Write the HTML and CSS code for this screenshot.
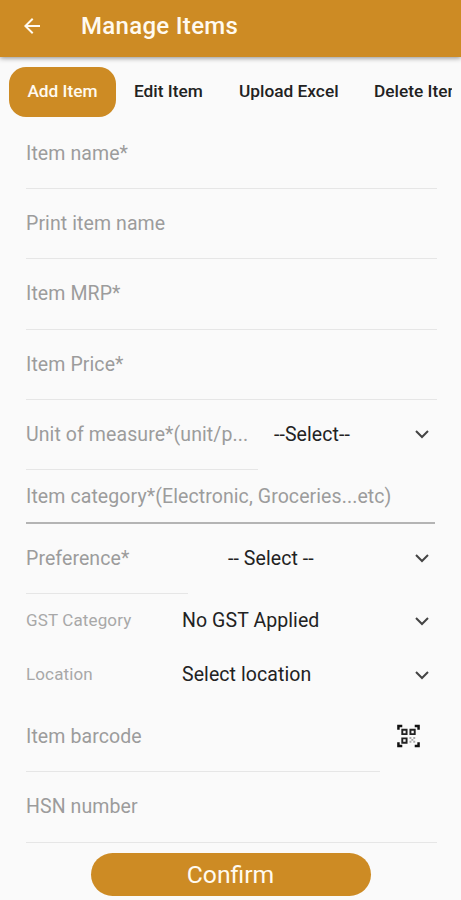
FILE: index.html
```
<!DOCTYPE html>
<html lang="en">
<head>
    <meta charset="UTF-8">
    <meta name="viewport" content="width=device-width, initial-scale=1.0">
    <title>Manage Items</title>
    <link rel="stylesheet" href="styles.css">
</head>
<body>
    <header class="app-bar">
        <svg class="back" viewBox="0 0 24 24"><path d="M20 11H7.83l5.59-5.59L12 4l-8 8 8 8 1.41-1.41L7.83 13H20z"/></svg>
        <h1>Manage Items</h1>
    </header>

    <nav class="tabs">
        <a class="tab active">Add Item</a>
        <a class="tab edit">Edit Item</a>
        <a class="tab upload">Upload Excel</a>
        <a class="tab delete">Delete Item</a>
    </nav>

    <main class="form">
        <div class="row"><label class="field">Item name*</label></div>
        <div class="row"><label class="field">Print item name</label></div>
        <div class="row"><label class="field">Item MRP*</label></div>
        <div class="row"><label class="field">Item Price*</label></div>
        <div class="row">
            <label class="field unit">Unit of measure*(unit/p...</label>
            <div class="select unit-select">
                <span>--Select--</span>
                <svg class="chevron" viewBox="0 0 14 10"><path d="M1 2l6 6 6-6"/></svg>
            </div>
        </div>
        <div class="row category"><label class="field">Item category*(Electronic, Groceries...etc)</label></div>
        <div class="row">
            <label class="field preference">Preference*</label>
            <div class="select preference-select">
                <span>-- Select --</span>
                <svg class="chevron" viewBox="0 0 14 10"><path d="M1 2l6 6 6-6"/></svg>
            </div>
        </div>
        <div class="row short">
            <label class="caption">GST Category</label>
            <div class="select">
                <span>No GST Applied</span>
                <svg class="chevron" viewBox="0 0 14 10"><path d="M1 2l6 6 6-6"/></svg>
            </div>
        </div>
        <div class="row short">
            <label class="caption">Location</label>
            <div class="select">
                <span>Select location</span>
                <svg class="chevron" viewBox="0 0 14 10"><path d="M1 2l6 6 6-6"/></svg>
            </div>
        </div>
        <div class="row">
            <label class="field barcode">Item barcode</label>
            <svg class="qr" viewBox="0 0 24 24">
                <path class="frame" d="M1.500 5.500v-4h4M18.500 1.500h4v4M22.500 18.500v4h-4M5.500 22.500h-4v-4"/>
                <path class="cell" d="M5.500 5.500h4.500v4.500H5.500zM14 5.500h4.500v4.500H14zM5.500 14.500h4.500v4.500H5.500z"/>
                <path class="dots" d="M13 13h2v2h-2zM17 13h2v2h-2zM15 15h2v2h-2zM13 17h2v2h-2zM17 17h2v2h-2z"/>
            </svg>
        </div>
        <div class="row"><label class="field">HSN number</label></div>
    </main>

    <button class="confirm">Confirm</button>
</body>
</html>
```
FILE: styles.css
```
* {
    box-sizing: border-box;
}
body {
    margin: 0;
    height: 900px;
    overflow: hidden;
    background: #fafafa;
    color: #222222;
    font-family: Roboto, sans-serif;
}
.app-bar {
    display: flex;
    align-items: center;
    height: 57px;
    padding: 0 20px 5px;
    background: #cd8b24;
    box-shadow: 0 1px 5px rgba(0, 0, 0, 0.45);
}
.back {
    width: 24px;
    height: 24px;
    fill: #fffaf0;
}
.app-bar h1 {
    margin: 0 0 0 37px;
    font-size: 24px;
    font-weight: 500;
    letter-spacing: 0.3px;
    color: #fffaf0;
}
.tabs {
    display: flex;
    height: 62px;
    margin-right: 9px;
    padding: 10px 0 2px 9px;
    overflow: hidden;
}
.tab {
    flex: none;
    height: 50px;
    line-height: 48px;
    font-size: 17.3px;
    font-weight: 500;
    white-space: nowrap;
    color: #222222;
}
.tab.active {
    width: 107px;
    margin-right: 18px;
    border-radius: 17px;
    text-align: center;
    background: #cd8b24;
    color: #fffaf0;
}
.edit {
    width: 105px;
}
.upload {
    width: 135px;
}
.form {
    padding: 0 24px 0 26px;
}
.row {
    display: flex;
    height: 70.2px;
}
.field {
    flex: 1;
    height: 100%;
    line-height: 69px;
    border-bottom: 1.5px solid #e6e6e6;
    font-size: 19.5px;
    letter-spacing: 0.09px;
    white-space: nowrap;
    color: #9c9c9c;
}
.unit {
    flex: none;
    width: 232px;
}
.category {
    height: 54px;
    padding-right: 2px;
}
.category .field {
    line-height: 53px;
    border-bottom: 2px solid #b4b4b4;
}
.preference {
    flex: none;
    width: 162px;
}
.select {
    display: flex;
    flex: 1;
    align-items: center;
    justify-content: space-between;
    height: 69px;
    padding-right: 8px;
    font-size: 19.5px;
    letter-spacing: 0.08px;
    white-space: nowrap;
}
.unit-select {
    padding-left: 16px;
}
.preference-select {
    padding-left: 40px;
}
.chevron {
    width: 14px;
    height: 10px;
    fill: none;
    stroke: #444444;
    stroke-width: 2;
}
.short {
    height: 54px;
}
.short .select {
    height: 53px;
}
.caption {
    width: 156px;
    line-height: 53px;
    font-size: 17px;
    letter-spacing: 0.13px;
    color: #a8a8a8;
}
.barcode {
    flex: none;
    width: 354px;
}
.qr {
    width: 23px;
    height: 24px;
    margin: 22px 0 0 17px;
    fill: none;
}
.frame {
    stroke: #111111;
    stroke-width: 2.6;
}
.cell {
    stroke: #222222;
    stroke-width: 2;
}
.dots {
    fill: #aaaaaa;
}
.confirm {
    display: block;
    width: 280px;
    height: 43px;
    margin: 10px auto 0;
    padding: 0;
    border: none;
    border-radius: 22px;
    background: #cd8b24;
    color: #fffaf0;
    font-family: inherit;
    font-size: 24.7px;
}
```
